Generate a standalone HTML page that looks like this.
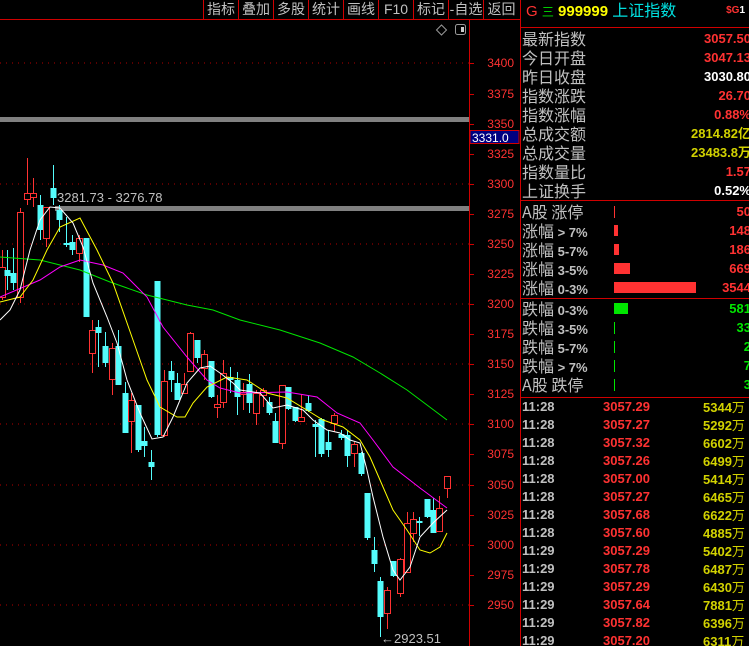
<!DOCTYPE html>
<html><head><meta charset="utf-8"><style>
html,body{margin:0;background:#000;width:749px;height:646px;overflow:hidden}
body{position:relative;font-family:"Liberation Sans","Noto Sans CJK SC",sans-serif}
.a{position:absolute;white-space:nowrap}
.lb{color:#c0c0c0;font-size:16px;line-height:19px;left:522px;font-family:"Noto Sans CJK SC","WenQuanYi Zen Hei",sans-serif}
.v{font-size:13px;font-weight:bold;line-height:19px;right:-2px;text-align:right}
.tb{position:absolute;top:0;height:19px;color:#c0c0c0;font-size:14px;line-height:19px;text-align:center;font-family:"Liberation Sans","Noto Sans CJK SC",sans-serif}
.r{color:#ff3232}.g{color:#00e600}.y{color:#d2d200}.w{color:#fff}
.tk{font-size:13px;line-height:18px;font-weight:bold}
</style></head><body>
<svg width="749" height="646" style="position:absolute;left:0;top:0">
<g fill="none" stroke="#b00000" stroke-dasharray="1,5">
<line x1="0" y1="63" x2="469" y2="63"/><line x1="0" y1="184" x2="469" y2="184"/><line x1="0" y1="244" x2="469" y2="244"/><line x1="0" y1="304" x2="469" y2="304"/><line x1="0" y1="364" x2="469" y2="364"/><line x1="0" y1="424" x2="469" y2="424"/><line x1="0" y1="485" x2="469" y2="485"/><line x1="0" y1="545" x2="469" y2="545"/><line x1="0" y1="605" x2="469" y2="605"/>
</g>
<rect x="0" y="117" width="469" height="5" fill="#808080"/>
<rect x="55" y="206" width="414" height="5" fill="#808080"/>
<g stroke="#d00000" stroke-width="1">
<line x1="0" y1="19.5" x2="520" y2="19.5"/><line x1="469.5" y1="19" x2="469.5" y2="646"/><line x1="520.5" y1="0" x2="520.5" y2="646"/>
<line x1="520" y1="27.5" x2="749" y2="27.5"/><line x1="520" y1="200.5" x2="749" y2="200.5"/><line x1="520" y1="298.5" x2="749" y2="298.5"/><line x1="520" y1="397.5" x2="749" y2="397.5"/>
<line x1="203.5" y1="0" x2="203.5" y2="19"/><line x1="238.5" y1="0" x2="238.5" y2="19"/><line x1="273.5" y1="0" x2="273.5" y2="19"/><line x1="308.5" y1="0" x2="308.5" y2="19"/><line x1="343.5" y1="0" x2="343.5" y2="19"/><line x1="378.5" y1="0" x2="378.5" y2="19"/><line x1="413.5" y1="0" x2="413.5" y2="19"/><line x1="448.5" y1="0" x2="448.5" y2="19"/><line x1="483.5" y1="0" x2="483.5" y2="19"/>
<path d="M470 63.5h4M470 94.5h4M470 124.5h4M470 154.5h4M470 184.5h4M470 214.5h4M470 244.5h4M470 274.5h4M470 304.5h4M470 334.5h4M470 364.5h4M470 394.5h4M470 424.5h4M470 454.5h4M470 485.5h4M470 515.5h4M470 545.5h4M470 575.5h4M470 605.5h4"/>
</g>
<path d="M441.5 25l5 5-5 5-5-5z" fill="none" stroke="#999"/>
<rect x="455.5" y="24.5" width="10" height="10" rx="2" fill="none" stroke="#999"/><rect x="461" y="27" width="3" height="5" fill="#ccc"/>
<g fill="#ff3232" font-size="12" text-anchor="end">
<text x="514" y="67">3400</text><text x="514" y="98">3375</text><text x="514" y="128">3350</text><text x="514" y="188">3300</text><text x="514" y="218">3275</text><text x="514" y="248">3250</text><text x="514" y="278">3225</text><text x="514" y="308">3200</text><text x="514" y="338">3175</text><text x="514" y="368">3150</text><text x="514" y="398">3125</text><text x="514" y="428">3100</text><text x="514" y="458">3075</text><text x="514" y="489">3050</text><text x="514" y="519">3025</text><text x="514" y="549">3000</text><text x="514" y="579">2975</text><text x="514" y="609">2950</text><text x="514" y="158">3325</text>
</g>
<rect x="470" y="130.5" width="49" height="13" fill="#000080" stroke="#d00000"/>
<text x="472" y="142" fill="#fff" font-size="12">3331.0</text>
<text x="57" y="202" fill="#c0c0c0" font-size="13">3281.73 - 3276.78</text>
<text x="381" y="643" fill="#c0c0c0" font-size="13">←2923.51</text>
<g id="c"></g>
<polyline fill="none" stroke="#00e600" points="0,257 40,260 80,270 110,282 147,295 187,305 213,310 240,320 280,330 320,343 353,357 380,373 407,390 447,420"/>
<polyline fill="none" stroke="#ff00ff" points="0,297 40,280 60,267 80,260 103,265 123,273 147,297 163,327 187,357 207,380 220,388 240,393 287,392 317,397 337,413 360,423 373,440 393,467 420,488 447,508"/>
<polyline fill="none" stroke="#ffff00" points="0,302 20,297 33,280 47,250 60,227 80,218 97,250 113,283 133,340 147,380 160,407 177,417 185,417 193,403 207,387 227,377 247,380 267,393 287,398 310,412 323,420 343,427 360,440 370,457 380,480 393,510 407,530 420,550 430,553 440,547 447,533"/>
<polyline fill="none" stroke="#ffffff" points="0,320 10,310 20,290 30,250 40,220 50,207 60,208 73,223 83,247 93,283 107,317 117,343 127,380 140,413 152,439 163,437 173,417 187,383 200,368 210,366 220,373 233,383 240,390 260,393 273,408 287,405 303,410 313,420 327,430 340,433 350,440 360,443 367,470 373,497 383,537 393,570 400,580 410,567 420,537 433,523 447,510"/>
</svg>
<div class="tb" style="left:204px;width:34px">指标</div><div class="tb" style="left:239px;width:34px">叠加</div><div class="tb" style="left:274px;width:34px">多股</div><div class="tb" style="left:309px;width:34px">统计</div><div class="tb" style="left:344px;width:34px">画线</div><div class="tb" style="left:379px;width:34px">F10</div><div class="tb" style="left:414px;width:34px">标记</div><div class="tb" style="left:449px;width:34px">-自选</div><div class="tb" style="left:484px;width:35px">返回</div>
<div class="a" style="left:526px;top:2px;font-size:15px;line-height:20px"><span class="r">G</span> <span class="g" style="font-size:12px">三</span> <b style="color:#ffff00">999999</b> <span style="color:#00e0e0;font-size:16px">上证指数</span></div>
<div class="a r" style="right:4px;top:5px;font-size:10px;font-weight:bold">$G<span class="w">1</span></div>
<div id="p"></div>
<script>
(function(){
var P=document.getElementById('p'),h='';
var TR=[['最新指数','3057.50','r'],['今日开盘','3047.13','r'],['昨日收盘','3030.80','w'],['指数涨跌','26.70','r'],['指数涨幅','0.88%','r'],['总成交额','2814.82亿','y'],['总成交量','23483.8万','y'],['指数量比','1.57','r'],['上证换手','0.52%','w']];
TR.forEach(function(t,i){var y=29+i*19;h+='<div class="a lb" style="top:'+y+'px">'+t[0]+'</div><div class="a v '+t[2]+'" style="top:'+y+'px">'+t[1]+'</div>';});
var br=[['A股','涨停','50',1,'r',1],['涨幅','&gt; 7%','148',4,'r'],['涨幅','5-7%','186',5,'r'],['涨幅','3-5%','669',16,'r'],['涨幅','0-3%','3544',82,'r']];
var bg=[['跌幅','0-3%','581',14,'g'],['跌幅','3-5%','33',1,'g'],['跌幅','5-7%','2',1,'g'],['跌幅','&gt; 7%','7',1,'g'],['A股','跌停','3',1,'g',1]];
function rows(a,y0){a.forEach(function(t,i){var y=y0+i*19;var sec=t[5]?'<span>'+t[1]+'</span>':'<span style="font-family:Liberation Sans;font-weight:bold;font-size:13px">'+t[1]+'</span>';h+='<div class="a lb" style="top:'+y+'px">'+t[0]+' '+sec+'</div><div class="a v '+t[4]+'" style="top:'+y+'px">'+t[2]+'</div><div class="a" style="left:614px;top:'+(y+4)+'px;width:'+t[3]+'px;height:'+(t[3]>1?11:12)+'px;background:'+(t[4]=='r'?'#ff3232':'#00e600')+'"></div>';});}
rows(br,202);rows(bg,299);
var tk=[['11:28','3057.29','5344'],['11:28','3057.27','5292'],['11:28','3057.32','6602'],['11:28','3057.26','6499'],['11:28','3057.00','5414'],['11:28','3057.27','6465'],['11:28','3057.68','6622'],['11:28','3057.60','4885'],['11:29','3057.29','5402'],['11:29','3057.78','6487'],['11:29','3057.29','6430'],['11:29','3057.64','7881'],['11:29','3057.82','6396'],['11:29','3057.20','6311']];
tk.forEach(function(t,i){var y=398+i*18;h+='<div class="a tk" style="left:522px;top:'+y+'px;color:#c0c0c0">'+t[0]+'</div><div class="a tk r" style="left:603px;top:'+y+'px">'+t[1]+'</div><div class="a tk y" style="left:703px;top:'+y+'px">'+t[2]+'<span style="font-weight:normal;font-family:Noto Sans CJK SC">万</span></div>';});
P.innerHTML=h;
var C=[[2,'r',267,297,250,300],[7,'c',270,276,250,290],[13,'c',273,283,248,290],[20,'r',212,297,208,303],[27,'r',193,199,158,205],[33,'r',193,197,178,207],[40,'c',205,230,195,240],[46,'r',207,238,207,247],[53,'c',188,198,165,205],[59,'c',210,220,205,232],[66,'c',243,245,217,247],[72,'c',242,250,235,255],[79,'r',238,253,235,262],[86,'c',238,317,238,317],[92,'r',330,353,320,373],[98,'c',327,333,320,367],[105,'c',346,363,332,367],[112,'r',348,379,343,395],[118,'c',346,385,330,385],[125,'c',393,433,382,433],[131,'r',400,421,393,453],[138,'c',405,450,405,452],[144,'c',441,446,427,457],[151,'c',462,467,450,480],[157,'c',281,435,281,437],[164,'r',381,435,370,437],[171,'c',371,380,361,392],[177,'c',383,400,373,400],[184,'r',384,393,373,393],[190,'r',333,371,332,372],[197,'c',340,358,340,363],[204,'r',354,368,350,380],[211,'c',361,397,361,398],[217,'r',404,407,395,418],[223,'r',373,402,360,408],[230,'c',377,380,367,393],[237,'c',380,397,372,415],[243,'r',392,394,383,410],[249,'c',384,403,374,413],[256,'r',393,413,390,425],[263,'r',390,395,388,407],[269,'c',402,413,397,415],[275,'c',421,443,413,443],[282,'r',385,443,385,449],[288,'c',387,409,387,410],[295,'c',407,421,407,422],[301,'r',417,421,395,421],[308,'c',403,411,395,412],[315,'c',424,427,420,457],[321,'c',419,454,418,457],[328,'c',442,450,430,457],[334,'r',415,423,413,432],[341,'c',434,438,430,440],[347,'c',435,456,430,467],[354,'r',444,453,442,467],[361,'c',453,474,452,476],[367,'c',493,538,493,540],[374,'c',550,564,537,572],[380,'c',581,617,577,637],[387,'r',590,613,587,629],[393,'c',561,576,561,577],[400,'r',559,593,558,597],[407,'r',523,572,512,572],[413,'r',519,533,512,542],[419,'c',521,523,517,536],[427,'c',499,517,499,518],[433,'c',510,533,498,533],[439,'r',508,531,496,531],[447,'r',476,488,476,498]];
var NS='http://www.w3.org/2000/svg',G=document.getElementById('c');
function el(n,a){var e=document.createElementNS(NS,n);for(var k in a)e.setAttribute(k,a[k]);G.appendChild(e);}
C.forEach(function(c){var x=c[0],col=c[1]=='r'?'#ff3232':'#54fcfc';
el('line',{x1:x+.5,y1:c[4],x2:x+.5,y2:c[5],stroke:col});
if(c[1]=='r'){el('rect',{x:x-2.5,y:c[2]+.5,width:6,height:Math.max(1,c[3]-c[2]),fill:'#000',stroke:col});}
else{el('rect',{x:x-2.5,y:c[2],width:6,height:Math.max(2,c[3]-c[2]),fill:col});}});
})();
</script>
</body></html>
